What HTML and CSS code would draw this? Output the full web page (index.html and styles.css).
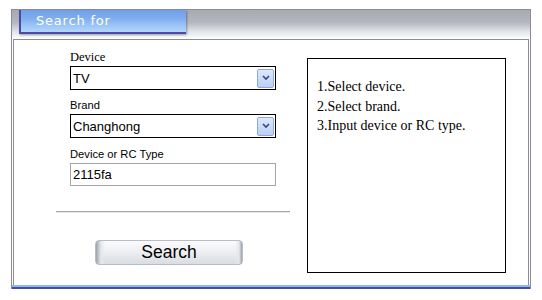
FILE: index.html
```html
<!DOCTYPE html>
<html lang="en">
<head>
  <meta charset="UTF-8">
  <title>Search for</title>
  <link rel="stylesheet" href="styles.css">
</head>
<body>

  <div class="window">
    <!-- title bar with the blue tab -->
    <div class="titlebar">
      <div class="tab">Search for</div>
    </div>

    <div class="panel">
      <!-- search form -->
      <div class="form-col">
        <div class="label label-serif">Device</div>
        <div class="combo">
          <span class="combo-value">TV</span>
          <span class="combo-btn">
            <svg width="8" height="6" viewBox="0 0 8 6"><path d="M1 1 L4 4 L7 1" fill="none" stroke="#2a4c8c" stroke-width="1.6"/></svg>
          </span>
        </div>

        <div class="label">Brand</div>
        <div class="combo">
          <span class="combo-value">Changhong</span>
          <span class="combo-btn">
            <svg width="8" height="6" viewBox="0 0 8 6"><path d="M1 1 L4 4 L7 1" fill="none" stroke="#2a4c8c" stroke-width="1.6"/></svg>
          </span>
        </div>

        <div class="label label-third">Device or RC Type</div>
        <input class="text-input" type="text" value="2115fa">

        <div class="separator"></div>

        <button class="search-btn">Search</button>
      </div>

      <!-- help text -->
      <div class="help-box">
        <p>1.Select device.</p>
        <p>2.Select brand.</p>
        <p>3.Input device or RC type.</p>
      </div>
    </div>

    <div class="bottom-line"></div>
  </div>

</body>
</html>
```

FILE: styles.css
```css
body {
  margin: 0;
  padding: 0;
  background-color: #ffffff;
  font-family: "Liberation Sans", Arial, sans-serif;
}

.window {
  position: relative;
  margin: 9px 0 0 11px;
  width: 518px;
  border: 1px solid #8c8c94;
  border-bottom: none;
}

.titlebar {
  position: relative;
  height: 28px;
  background: linear-gradient(to bottom, #a7aab3 0%, #b4b7bf 45%, #dfe1e8 75%, #fafbfe 100%);
}

.tab {
  position: absolute;
  top: 0;
  left: 7px;
  width: 167px;
  height: 24px;
  padding-left: 15px;
  box-sizing: border-box;
  border-left: 2px solid #4b4ba6;
  border-bottom: 2px solid #4b4ba6;
  background: linear-gradient(to bottom, #6f9fe8 0%, #80aeee 40%, #9cc5f6 70%, #b3d5fa 100%);
  box-shadow: 1px 1px 2px rgba(0,0,0,0.35);
  color: #ffffff;
  font-family: "DejaVu Sans", Verdana, sans-serif;
  font-size: 13px;
  letter-spacing: 0.8px;
  line-height: 22px;
}

.panel {
  display: flex;
  margin: 1px 1px 0;
  height: 245px;
  border: 1px solid #8c8c94;
  border-bottom: none;
}

.form-col {
  display: flex;
  flex-direction: column;
  margin-left: 42px;
  padding: 10px 14px 0;
  width: 206px;
}

.label {
  font-size: 11.2px;
  line-height: 14px;
  height: 14px;
  margin: 8px 0 2px;
  color: #000;
}

.label-serif {
  margin-top: 0;
  font-family: "Liberation Serif", "Times New Roman", serif;
  font-size: 12.5px;
}

.label-third {
  margin-top: 9px;
}

.combo {
  display: flex;
  align-items: center;
  height: 22px;
  border: 1px solid #000;
  background: #fff;
}

.combo-value {
  flex: 1;
  padding-left: 2px;
  font-size: 13px;
}

.combo-btn {
  display: flex;
  align-items: center;
  justify-content: center;
  width: 15px;
  height: 17px;
  margin-right: 1px;
  border: 1px solid #8fa9db;
  border-radius: 2px;
  background: linear-gradient(to bottom, #dfe8fb 0%, #bccff3 100%);
}

.text-input {
  height: 23px;
  box-sizing: border-box;
  padding: 0 2px;
  border: 1px solid #a5a5a5;
  font-family: "Liberation Sans", Arial, sans-serif;
  font-size: 13px;
  color: #000;
  outline: none;
}

.separator {
  margin: 25px -14px 0;
  height: 1px;
  border-top: 1px solid #a8a8a8;
  background: #e6e6e6;
}

.search-btn {
  margin: 27px 0 0 25px;
  width: 148px;
  height: 25px;
  border: 1px solid #b8bcc4;
  border-radius: 4px;
  background:
    linear-gradient(to right, #9da2ab 0, #e6e8ec 5px, transparent 9px, transparent 139px, #e6e8ec 143px, #9da2ab 100%),
    linear-gradient(to bottom, #fbfbfc 0%, #eceef1 50%, #d9dce1 100%);
  font-family: "Liberation Sans", Arial, sans-serif;
  font-size: 17.5px;
  color: #000;
  cursor: pointer;
}

.help-box {
  margin: 18px 0 0 17px;
  width: 199px;
  height: 215px;
  padding: 18px 0 0 9px;
  box-sizing: border-box;
  border: 1px solid #000;
  font-family: "Liberation Serif", "Times New Roman", serif;
  font-size: 14px;
}

.help-box p {
  margin: 0;
  line-height: 19.5px;
}

.bottom-line {
  height: 2px;
  background: #86b8f2;
  border-bottom: 2px solid #4a4a9e;
}
```
